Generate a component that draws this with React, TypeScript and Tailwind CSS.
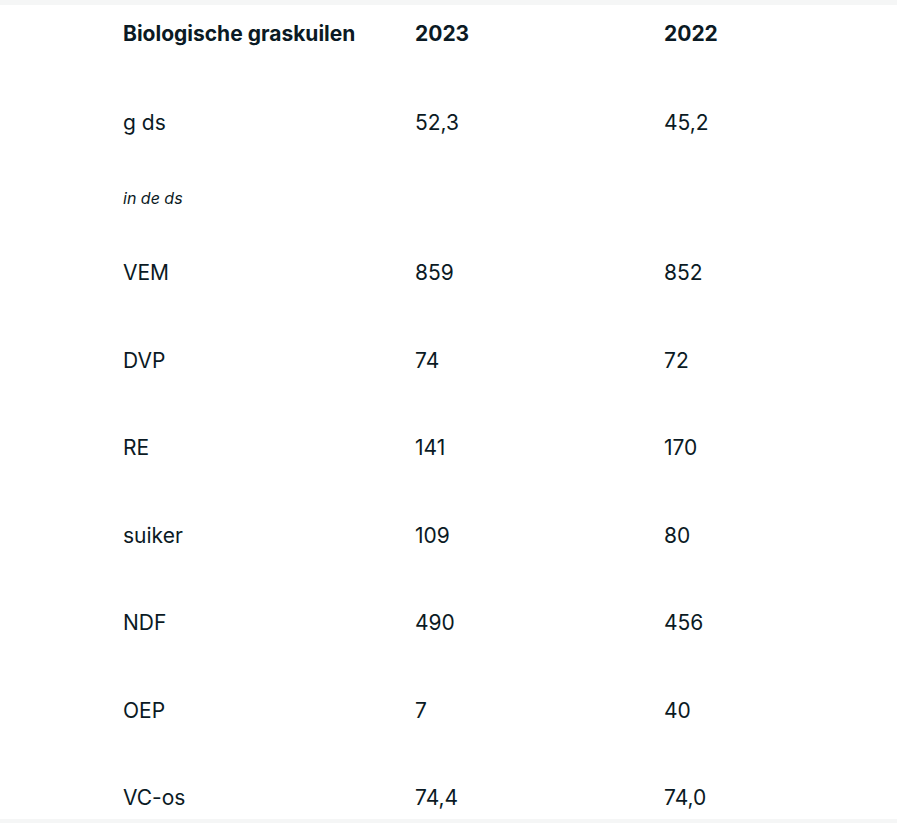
import React from "react";

type Row = { label: string; a: string; b: string };

const rows: Row[] = [
  { label: "VEM", a: "859", b: "852" },
  { label: "DVP", a: "74", b: "72" },
  { label: "RE", a: "141", b: "170" },
  { label: "suiker", a: "109", b: "80" },
  { label: "NDF", a: "490", b: "456" },
  { label: "OEP", a: "7", b: "40" },
  { label: "VC-os", a: "74,4", b: "74,0" },
];

const font = { fontFamily: "Inter, 'Noto Sans', sans-serif" };

export default function App() {
  return (
    <div className="flex h-[823px] flex-col overflow-hidden bg-white text-[#0b1a24]" style={font}>
      <div className="h-[5px] shrink-0 bg-[#f5f6f6]" />
      <div className="flex-1 overflow-hidden pl-[123px]">
        {/* header */}
        <div className="flex h-[74px] items-center pb-[16px] text-[21px] font-bold">
          <div className="w-[292px]">Biologische graskuilen</div>
          <div className="w-[249px]">2023</div>
          <div>2022</div>
        </div>

        <div className="flex h-[88px] items-center text-[21px]">
          <div className="w-[292px]">g ds</div>
          <div className="w-[249px]">52,3</div>
          <div>45,2</div>
        </div>

        <div className="flex h-[62px] items-center text-[16px] italic">
          <div>in de ds</div>
        </div>

        {rows.map((r) => (
          <div key={r.label} className="flex h-[87.5px] items-center text-[21px]">
            <div className="w-[292px]">{r.label}</div>
            <div className="w-[249px]">{r.a}</div>
            <div>{r.b}</div>
          </div>
        ))}
      </div>
      <div className="h-[4px] shrink-0 bg-[#f5f6f6]" />
    </div>
  );
}
